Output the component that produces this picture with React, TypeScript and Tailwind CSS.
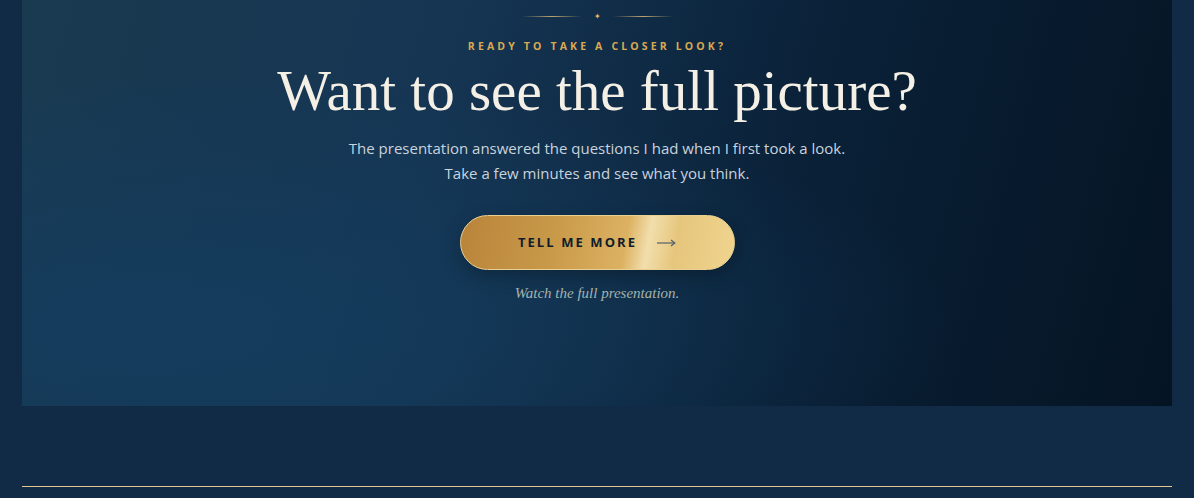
export default function App() {
  return (
    <div className="min-h-[498px] bg-[#112a45] pb-[11px]">
      <section className="mx-[22px] h-[406px] bg-[radial-gradient(ellipse_at_12%_80%,#143c5d_0%,rgba(20,60,93,0)_55%),linear-gradient(105deg,#1a3a50_0%,#153553_35%,#0a2138_65%,#051423_100%)] flex flex-col items-center pt-[14px]">
        {/* ornament */}
        <div className="flex items-center gap-[12px]">
          <span className="block w-[60px] h-px bg-[linear-gradient(90deg,rgba(230,190,110,0),rgba(230,195,120,0.8),rgba(230,190,110,0))]" />
          <span className="text-[8px] leading-[4px] text-[#e9bb62]">✦</span>
          <span className="block w-[60px] h-px bg-[linear-gradient(90deg,rgba(230,190,110,0),rgba(230,195,120,0.8),rgba(230,190,110,0))]" />
        </div>

        <p className="mt-[21px] font-['Open_Sans',sans-serif] font-bold text-[10.5px] leading-[14px] tracking-[0.3em] text-[#d9a951]">
          READY TO TAKE A CLOSER LOOK?
        </p>

        <h2 className="mt-[6px] font-['Liberation_Serif',serif] text-[57px] leading-[64px] text-[#f5f0e6]">
          Want to see the full picture?
        </h2>

        <p className="mt-[13px] text-center font-['Open_Sans',sans-serif] text-[15px] leading-[25px] text-[#c9d3dd]">
          The presentation answered the questions I had when I first took a look.
          <br />
          Take a few minutes and see what you think.
        </p>

        <button className="mt-[29px] w-[275px] h-[55px] rounded-full border border-[#e9cf92] bg-[linear-gradient(100deg,#b9843a_0%,#c99a4a_35%,#dcb262_60%,#f2deac_68%,#e6c67d_78%,#f0d48e_100%)] shadow-[0_6px_18px_rgba(0,0,0,0.25)] flex items-center justify-center gap-[20px]">
          <span className="font-['Open_Sans',sans-serif] font-bold text-[13px] tracking-[0.16em] text-[#0f1d2b]">
            TELL ME MORE
          </span>
          <svg width="19" height="8" viewBox="0 0 19 8" fill="none">
            <path d="M0 4H17.5" stroke="#55606a" strokeWidth="1.2" />
            <path d="M14 1L17.8 4L14 7" stroke="#55606a" strokeWidth="1.2" />
          </svg>
        </button>

        <p className="mt-[12px] font-['Liberation_Serif',serif] italic text-[15px] leading-[22px] text-[#a3b3ac]">
          Watch the full presentation.
        </p>
      </section>
      <div className="mx-[22px] mt-[80px] h-px bg-[#e3c78f]" />
    </div>
  );
}
